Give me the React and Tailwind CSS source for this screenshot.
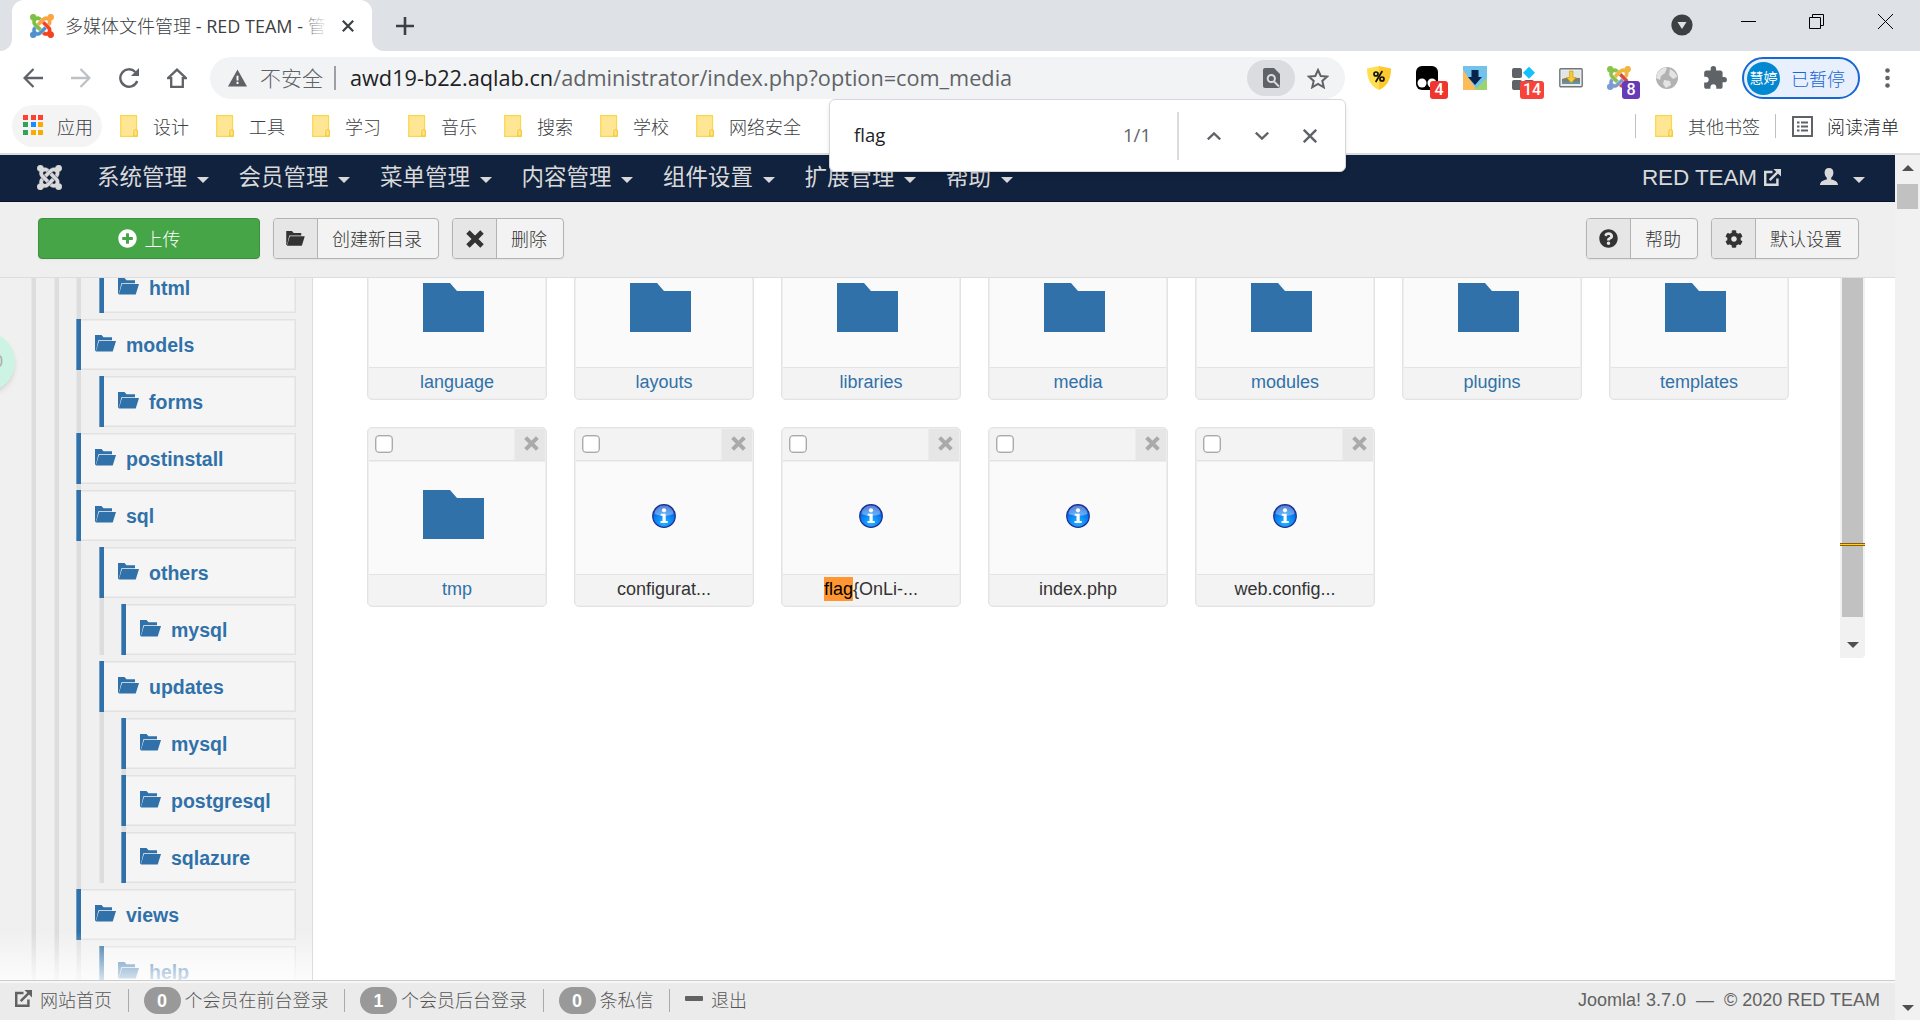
import { FaCog, FaPlusCircle, FaQuestionCircle } from "react-icons/fa";
import { MdExtension } from "react-icons/md";

const BOOKMARKS = ["设计", "工具", "学习", "音乐", "搜索", "学校", "网络安全"];

const MENUS = ["系统管理", "会员管理", "菜单管理", "内容管理", "组件设置", "扩展管理", "帮助"];

const TREE = [
  { name: "html", level: 4 },
  { name: "models", level: 3 },
  { name: "forms", level: 4 },
  { name: "postinstall", level: 3 },
  { name: "sql", level: 3 },
  { name: "others", level: 4 },
  { name: "mysql", level: 5 },
  { name: "updates", level: 4 },
  { name: "mysql", level: 5 },
  { name: "postgresql", level: 5, joined: true },
  { name: "sqlazure", level: 5, joined: true },
  { name: "views", level: 3 },
  { name: "help", level: 4 },
];

const FOLDERS = ["language", "layouts", "libraries", "media", "modules", "plugins", "templates"];

const FILES = [
  { name: "tmp", folder: true },
  { name: "configurat..." },
  { name: "{OnLi-...", hit: "flag" },
  { name: "index.php" },
  { name: "web.config..." },
];

const JOOMLA_ARMS = [
  "M.6 92.1C.6 58.8 27.4 32 60.4 32c30 0 54.5 21.9 59.2 50.2 32.6-7.6 67.1.6 96.5 30l-44.3 44.3c-20.5-20.5-42.6-16.3-55.4-3.5-14.3 14.3-14.3 37.9 0 52.2l99.5 99.5-44 44.3c-87.7-87.2-49.7-49.7-99.8-99.7-26.8-26.5-35-64.8-24.8-98.9C20.4 144.6.6 120.7.6 92.1z",
  "M130.1 208.5l44.3 44.3c10-10 89.7-89.7 99.7-99.8 14.3-14.3 37.6-14.3 51.9 0 12.8 12.8 17 35-3.5 55.4l44 44.3c31.2-31.2 38.5-67.6 28.9-101.2 29.2-4.1 51.9-29.2 51.9-59.5 0-33.2-26.8-60.1-59.8-60.1-30.3 0-55.4 22.5-59.5 51.6-33.8-9.9-71.7-1.5-98.3 25.1-18.3 19.1-71.1 71.5-99.6 99.9z",
  "M396.4 360.7c8.2-32.7-.9-68.5-26.3-93.9-11.8-12.2 5 4.7-99.5-99.7l-44.3 44.3 99.7 99.7c14.3 14.3 14.3 37.6 0 51.9-12.8 12.8-35 17-55.4-3.5l-44 44.3c27.6 30.2 68 38.8 102.7 28 5.5 27.4 29.7 48.1 58.9 48.1 33 0 59.8-26.8 59.8-60.1 0-30.2-22.5-55-51.6-59.1z",
  "M312.1 307.6l-44-44.3c-87 86.4-50.4 50.4-99.7 99.8-14.3 14.3-37.6 14.3-51.9 0-13.1-13.4-16.9-35.3 3.2-55.4l-44-44.3c-30.2 30.2-38 65.2-29.5 98.3-26.7 6-46.2 29.9-46.2 58.2C0 453.2 26.8 480 59.8 480c28.6 0 52.5-19.8 58.6-46.7 32.7 8.2 68.5-.6 94.2-26 32.1-32 12.2-12.4 99.5-99.7z",
];

function Joomla({ colors, className }) {
  return (
    <svg viewBox="0 32 448 448" className={className}>
      {JOOMLA_ARMS.map((d, i) => (
        <path key={i} d={d} fill={colors[i]} stroke={colors[i]} strokeWidth="6" />
      ))}
    </svg>
  );
}

function BookmarkFolder() {
  return (
    <svg viewBox="0 0 18 22" className="h-[22px] w-[18px] shrink-0">
      <path d="M.7.7h15.8v14.6h.8v6H.7z" fill="#ffe694" stroke="#fbd647" strokeWidth="1.2" />
      <path d="M13.8 21v-4.6a1.7 1.7 0 0 1 3.4 0V21z" fill="#ffe38c" stroke="#f2c531" strokeWidth="1" />
    </svg>
  );
}

function FolderOpen({ className }) {
  return (
    <svg viewBox="0 0 21 17" className={className} fill="currentColor">
      <path d="M0 16V0h6.5l2 2.2H17v3H3.4L1 15.5z" />
      <path d="M4 6h17l-3.3 10.6H.8z" />
    </svg>
  );
}

function Cross({ className }) {
  return (
    <svg viewBox="0 0 20 20" className={className} fill="none" stroke="currentColor" strokeWidth="5.4">
      <path d="M2.2 2.2l15.6 15.6M17.8 2.2L2.2 17.8" />
    </svg>
  );
}

function ExternalLink({ className }) {
  return (
    <svg viewBox="0 0 18 18" className={className} fill="none" stroke="currentColor">
      <path d="M9 3.2H1.3v13.5h12.9V10" strokeWidth="2.6" />
      <path d="M6 11.8l8.5-8.5" strokeWidth="2.6" />
      <path d="M10 0h8v8z" fill="currentColor" stroke="none" />
    </svg>
  );
}

function Caret({ className }) {
  return (
    <svg viewBox="0 0 12 6" className={className}>
      <path d="M0 0h12L6 6z" fill="currentColor" />
    </svg>
  );
}

function Badge({ className, children }) {
  return (
    <span
      className={`absolute top-[15px] flex h-[18px] items-center justify-center rounded-[3px] font-['Roboto'] text-[16px] font-medium text-white ${className}`}
    >
      {children}
    </span>
  );
}

function TabStrip() {
  return (
    <div className="flex h-[51px] bg-[#dee1e6]">
      <div className="flex w-3 flex-col justify-end bg-white">
        <div className="h-full rounded-br-[12px] bg-[#dee1e6]" />
      </div>
      <div className="bg-[#dee1e6]">
        <div className="flex h-[51px] w-[360px] items-center rounded-t-[12px] bg-white pl-[18px]">
          <Joomla colors={["#7ac143", "#f9a541", "#f44321", "#5091cd"]} className="h-6 w-6" />
          <div className="relative ml-[11px] w-[264px] overflow-hidden text-[18px] leading-6 font-light whitespace-nowrap text-[#3c4043]">
            多媒体文件管理 <span className="font-normal">- RED TEAM -</span> 管
            <div className="absolute inset-y-0 right-0 w-6 bg-linear-to-r from-white/30 to-white" />
          </div>
          <svg viewBox="0 0 12 12" className="ml-[13px] h-3 w-3" stroke="#3c4043" strokeWidth="2.2">
            <path d="M.8.8l10.4 10.4M11.2.8L.8 11.2" />
          </svg>
        </div>
      </div>
      <div className="w-3 bg-white">
        <div className="h-full rounded-bl-[12px] bg-[#dee1e6]" />
      </div>
      <svg viewBox="0 0 18 18" className="mt-[17px] ml-3 h-[18px] w-[18px]" stroke="#3c4043" strokeWidth="2.6">
        <path d="M9 0v18M0 9h18" />
      </svg>
      <div className="ml-auto flex pr-[27px]">
        <svg viewBox="0 0 22 22" className="mt-[14px] h-[22px] w-[22px]">
          <circle cx="11" cy="11" r="10.6" fill="#3c4043" />
          <path d="M6.5 8h9L11 15z" fill="#dee1e6" />
        </svg>
        <svg viewBox="0 0 15 15" className="mt-[14px] ml-[48px] h-[15px] w-[15px]" stroke="#000" fill="none">
          <path d="M0 7.5h15" />
        </svg>
        <svg viewBox="0 0 15 15" className="mt-[14px] ml-[53px] h-[15px] w-[15px]" stroke="#000" fill="none">
          <path d="M.5 3.5h11v11H.5zM3.5 3.5v-3h11v11h-3" />
        </svg>
        <svg viewBox="0 0 15 15" className="mt-[14px] ml-[54px] h-[15px] w-[15px]" stroke="#000" fill="none">
          <path d="M0 0l15 15M15 0L0 15" />
        </svg>
      </div>
    </div>
  );
}

function Extensions() {
  return (
    <div className="ml-[22px] flex items-center">
      <svg viewBox="0 0 24 24" className="h-6 w-6">
        <path d="M12 0l12 2.6C24 14 20 20.5 12 24z" fill="#fdc92e" />
        <path d="M12 0L0 2.6C0 14 4 20.5 12 24z" fill="#ffdf4f" />
        <g stroke="#111" strokeWidth="1.7" fill="none">
          <circle cx="9" cy="8" r="2" />
          <circle cx="15" cy="13" r="2" />
          <path d="M15.3 5L8.7 16" />
        </g>
      </svg>
      <div className="relative ml-[25px] h-6 w-[22px]">
        <svg viewBox="0 0 22 24" className="h-6 w-[22px]">
          <rect width="22" height="24" rx="6" fill="#000" />
          <circle cx="6" cy="17" r="4.5" fill="#fff" />
          <circle cx="16" cy="17" r="4.5" fill="#fff" />
        </svg>
        <Badge className="left-[14px] w-[18px] bg-[#f0352f]">4</Badge>
      </div>
      <svg viewBox="0 0 24 24" className="ml-[25px] h-6 w-6">
        <path d="M0 0h24v24H0z" fill="#72c2ea" />
        <path d="M0 4l14 20H0z" fill="#fbbd5c" />
        <path d="M24 12v12H11z" fill="#9fd371" />
        <path d="M8.5 4h7v7H19l-7 8-7-8h3.5z" fill="#05254f" />
      </svg>
      <div className="relative ml-[25px] h-6 w-6">
        <svg viewBox="0 0 24 24" className="h-6 w-6">
          <g fill="#5f6368">
            <rect y="2" width="10" height="10" rx="2" />
            <rect y="14" width="10" height="10" rx="2" />
            <rect x="12" y="14" width="10" height="10" rx="2" />
          </g>
          <path d="M17 .8l6 6-6 6-6-6z" fill="#12c2ff" />
        </svg>
        <Badge className="left-[8px] w-[24px] bg-[#f8433a]">14</Badge>
      </div>
      <svg viewBox="0 0 24 20" className="ml-[23px] h-5 w-6">
        <rect x=".8" y=".8" width="22.4" height="18" rx="1" fill="#e9edf0" stroke="#73777a" strokeWidth="1.4" />
        <path d="M3 3h18v8H3z" fill="#dfe6e6" />
        <path d="M3 11q4-2 18-1v6H3z" fill="#8a7b60" />
        <path d="M3 13.5h18V16H3z" fill="#5f93ac" />
        <path d="M10.5 3h3.5v6.5h3L12.3 15 7.5 9.5h3z" fill="#f6ca31" stroke="#c99312" strokeWidth=".6" />
      </svg>
      <div className="relative ml-[24px] h-6 w-6">
        <Joomla colors={["#8bc34a", "#f0b740", "#d94a3d", "#7c9bd2"]} className="h-6 w-6" />
        <Badge className="left-[15px] w-[18px] bg-[#673ab7]">8</Badge>
      </div>
      <svg viewBox="0 0 24 24" className="ml-[24px] h-6 w-6">
        <circle cx="12" cy="12" r="11" fill="#b2b2b2" />
        <path d="M4 5q5-5 8-3l-2 5-4 3-1 4-4-2q0-4 3-7zM15 3q6 3 7 8l-4 2-4-4zM9 14l6 1 1 4-5 3-3-4z" fill="#e4e4e4" />
      </svg>
      <MdExtension className="ml-[23px] h-[26px] w-[26px] text-[#5f6368]" />
    </div>
  );
}

function AddressBar() {
  return (
    <div className="flex h-[54px] items-center bg-white py-1.5 pl-[23px]">
      <div className="flex items-center gap-[28px] text-[#5f6368]">
        <svg viewBox="0 0 20 20" className="h-5 w-5" fill="none" stroke="currentColor" strokeWidth="2.3">
          <path d="M20 10H2M10.5 1L1.6 10l8.9 9" />
        </svg>
        <svg viewBox="0 0 20 20" className="h-5 w-5 text-[#bdc1c6]" fill="none" stroke="currentColor" strokeWidth="2.3">
          <path d="M0 10h18M9.5 1l8.9 9-8.9 9" />
        </svg>
        <svg viewBox="0 0 20 20" className="h-5 w-5" fill="none" stroke="currentColor" strokeWidth="2.4">
          <path d="M18.2 13A8.7 8.7 0 1 1 16.3 4" />
          <path d="M20 0v8h-8z" fill="currentColor" stroke="none" />
        </svg>
        <svg viewBox="0 0 20 20" className="h-5 w-5" fill="none" stroke="currentColor" strokeWidth="2.3">
          <path d="M1 10.2h3.2v8.6h11.6v-8.6H19L10 1.6z" />
        </svg>
      </div>
      <div className="ml-[23px] flex h-[42px] w-[1135px] items-center rounded-full bg-[#f1f3f4] pl-[18px]">
        <svg viewBox="0 0 20 18" className="h-[18px] w-[19px]">
          <path d="M10 0l10 18H0z" fill="#5f6368" />
          <path d="M9 6.5h2v5H9zM9 13h2v2.2H9z" fill="#fff" />
        </svg>
        <span className="ml-[13px] text-[21px] font-light text-[#5f6368]">不安全</span>
        <div className="ml-[11px] h-6 w-0.5 bg-[#9aa0a6]" />
        <span className="ml-3.5 w-[672px] text-[21.7px] whitespace-nowrap text-[#5f6368]">
          <span className="text-[#202124]">awd19-b22.aqlab.cn</span>
          /administrator/index.php?option=com_media
        </span>
        <div className="ml-auto flex h-9 w-12 items-center justify-center rounded-full bg-[#dadce0]">
          <svg viewBox="0 0 17 20" className="h-5 w-[17px]">
            <path d="M2 0h9l6 6v12a2 2 0 0 1-2 2H2a2 2 0 0 1-2-2V2a2 2 0 0 1 2-2z" fill="#5f6368" />
            <circle cx="8.3" cy="10.5" r="3.6" fill="none" stroke="#dadce0" strokeWidth="2" />
            <path d="M11 13.5l5 5" stroke="#dadce0" strokeWidth="2" />
          </svg>
        </div>
        <svg viewBox="0 0 22 21" className="mr-4 ml-3 h-[21px] w-[22px]" fill="none" stroke="#5f6368" strokeWidth="2">
          <path d="M11 2l2.7 6 6.5.6-4.9 4.3 1.5 6.4-5.8-3.4-5.8 3.4 1.5-6.4L1.8 8.6 8.3 8z" />
        </svg>
      </div>
      <Extensions />
      <div className="ml-[14px] flex h-[42px] w-[118px] shrink-0 items-center rounded-full border-2 border-[#1967d2] bg-[#e8f0fe] pl-[3px] text-[#1967d2]">
        <span className="flex h-[33px] w-[33px] items-center justify-center rounded-full bg-[#0288d1] text-[14px] text-white">
          慧婷
        </span>
        <span className="mt-0.5 ml-[11px] text-[18px] font-light">已暂停</span>
      </div>
      <svg viewBox="0 0 5 20" className="ml-[25px] h-5 w-[5px]" fill="#5f6368">
        <circle cx="2.5" cy="2.5" r="2.3" />
        <circle cx="2.5" cy="10" r="2.3" />
        <circle cx="2.5" cy="17.5" r="2.3" />
      </svg>
    </div>
  );
}

function BookmarksBar() {
  const dots = ["#ff4131", "#ff4131", "#ff4131", "#34a35a", "#1a8cff", "#f9ab00", "#34a35a", "#f9ab00", "#f9ab00"];
  return (
    <div className="flex h-[50px] items-start border-b-2 border-[#dadce0] bg-white pl-3 text-[18px] font-light text-[#3c4043]">
      <div className="flex h-[42px] w-[90px] items-center rounded-full bg-[#f4f4f4] pl-[11px]">
        <div className="-mt-[3px] grid grid-cols-3 gap-[2.5px]">
          {dots.map((color, i) => (
            <i key={i} className="h-[5px] w-[5px]" style={{ background: color }} />
          ))}
        </div>
        <span className="mt-0.5 ml-[14px]">应用</span>
      </div>
      <div className="ml-[18px] flex h-[42px] items-center gap-[27px]">
        {BOOKMARKS.map((name) => (
          <div key={name} className="flex items-center gap-[15px]">
            <BookmarkFolder />
            <span className="mt-0.5">{name}</span>
          </div>
        ))}
      </div>
      <div className="mr-[21px] ml-auto flex h-[42px] items-center">
        <div className="h-6 w-px bg-[#bdc1c6]" />
        <div className="ml-[19px] flex items-center gap-[15px]">
          <BookmarkFolder />
          <span className="mt-0.5">其他书签</span>
        </div>
        <div className="ml-[15px] h-6 w-px bg-[#bdc1c6]" />
        <svg viewBox="0 0 21 21" className="ml-4 h-[21px] w-[21px]" fill="none" stroke="#5f6368">
          <rect x="1" y="1" width="19" height="19" strokeWidth="2" />
          <path d="M5 6.5h2.5M5 10.5h2.5M5 14.5h2.5M9 6.5h7M9 10.5h7M9 14.5h7" strokeWidth="2" />
        </svg>
        <span className="mt-0.5 ml-[14px] text-[#202124]">阅读清单</span>
      </div>
    </div>
  );
}

function FindBar() {
  return (
    <div className="absolute top-[99px] left-[829px] z-10 flex h-[73px] w-[517px] items-center rounded-[6px] border border-[#d5d7da] bg-white pl-6 text-[18.5px] text-[#202124] shadow-md">
      <span>flag</span>
      <span className="ml-auto text-[#5f6368]">1/1</span>
      <div className="ml-[26px] h-12 w-0.5 bg-[#dadce0]" />
      <svg viewBox="0 0 14 8" className="ml-[28px] h-2 w-3.5" fill="none" stroke="#5f6368" strokeWidth="2.3">
        <path d="M.8 7.4L7 1.4l6.2 6" />
      </svg>
      <svg viewBox="0 0 14 8" className="ml-[34px] h-2 w-3.5" fill="none" stroke="#5f6368" strokeWidth="2.3">
        <path d="M.8.6L7 6.6l6.2-6" />
      </svg>
      <svg viewBox="0 0 14 14" className="mr-[28px] ml-[34px] h-3.5 w-3.5" stroke="#5f6368" strokeWidth="2.4">
        <path d="M.8.8l12.4 12.4M13.2.8L.8 13.2" />
      </svg>
    </div>
  );
}

function Navbar() {
  return (
    <div className="flex h-[47px] items-center border-b border-[#0a0f2a] bg-[#10223e] pl-[37px] text-[22.5px] text-[#d9d9d9]">
      <Joomla colors={["#d9d9d9", "#d9d9d9", "#d9d9d9", "#d9d9d9"]} className="-mt-0.5 h-[25px] w-[25px]" />
      <div className="ml-[35px] flex items-center gap-[30px]">
        {MENUS.map((name) => (
          <div key={name} className="flex items-center">
            <span>{name}</span>
            <Caret className="mt-[3px] ml-[9.5px] h-1.5 w-3" />
          </div>
        ))}
      </div>
      <span className="ml-auto font-['Liberation_Sans'] tracking-[-0.1px]">RED TEAM</span>
      <ExternalLink className="-mt-px ml-[7px] h-[17px] w-[17px]" />
      <svg viewBox="0 0 18 17" className="-mt-1 ml-[39px] h-[17px] w-[18px]" fill="currentColor">
        <path d="M9 0c3 0 4.4 2 4.4 4.6 0 2.4-1 4.2-2.2 5.2v1.6C15 12.2 18 13.6 18 17H0c0-3.4 3-4.8 6.8-5.6V9.8C5.6 8.8 4.6 7 4.6 4.6 4.6 2 6 0 9 0z" />
      </svg>
      <Caret className="mt-[3px] mr-[30px] ml-[15px] h-1.5 w-3" />
    </div>
  );
}

function ToolButton({ icon, label, className }) {
  return (
    <div
      className={`flex h-[41px] overflow-hidden rounded-[4px] border border-[#b3b3b3] bg-[#f3f3f3] text-[#333] shadow-xs ${className}`}
    >
      <div className="flex w-[44px] shrink-0 items-center justify-center border-r border-[#b3b3b3] bg-[#e6e6e6]">
        {icon}
      </div>
      <span className="mt-[3px] flex flex-1 items-center justify-center pr-0.5 text-[18px] font-light">{label}</span>
    </div>
  );
}

function Toolbar() {
  return (
    <div className="flex h-[76px] border-b border-[#ddd] bg-[#efefef] pt-4 pl-[38px]">
      <div className="flex h-[41px] w-[222px] items-center justify-center gap-2 rounded-[4px] border border-[#3d903d] bg-[#46a546] text-[18px] text-white shadow-xs">
        <FaPlusCircle className="h-[19px] w-[19px]" />
        <span className="mt-[3px] font-light">上传</span>
      </div>
      <ToolButton className="ml-[13px] w-[166px]" icon={<FolderOpen className="h-[15px] w-[19px]" />} label="创建新目录" />
      <ToolButton className="ml-[13px] w-[112px]" icon={<Cross className="h-[18px] w-[18px]" />} label="删除" />
      <ToolButton className="ml-auto w-[112px]" icon={<FaQuestionCircle className="h-[19px] w-[19px]" />} label="帮助" />
      <ToolButton className="mr-9 ml-[13px] w-[148px]" icon={<FaCog className="h-[18px] w-[18px]" />} label="默认设置" />
    </div>
  );
}

function Rail({ className }) {
  return <div className={`w-[5px] shrink-0 border-l border-[#e7e7e7] bg-[#ddd] ${className}`} />;
}

function TreeRow({ node }) {
  return (
    <div className="flex h-[57px] pl-[31px]">
      <Rail />
      <Rail className="ml-[18px]" />
      {node.level > 3 && <Rail className="ml-[17px]" />}
      {node.level === 5 && <Rail className="ml-[18px]" />}
      <div className={`flex flex-1 flex-col ${node.level === 4 ? "ml-[18px]" : "ml-[17px]"}`}>
        <div className={`h-1.5 w-[5px] ${node.level === 3 || node.joined ? "border-l border-[#e7e7e7] bg-[#ddd]" : ""}`} />
        <div className="flex h-[51px] text-[#3071a9]">
          <div className="w-[5px] border-l border-[#6f9cc3] bg-[#3071a9]" />
          <div className="flex flex-1 items-center border border-l-0 border-[#e2e2e2] bg-[#f5f5f5] pl-3.5 shadow-[inset_-1px_0_0_#ebebeb,inset_0_1px_0_#ebebeb,inset_0_-1px_0_#ebebeb]">
            <FolderOpen className="-mt-0.5 h-[17px] w-[21px]" />
            <span className="ml-2.5 text-[19.5px] leading-6 font-bold">{node.name}</span>
          </div>
        </div>
      </div>
    </div>
  );
}

function Sidebar() {
  return (
    <div className="relative flex w-[313px] shrink-0 flex-col justify-start overflow-hidden border-r border-[#ddd] bg-[#f0f0f0] pr-4">
      <div className="-mt-[22px]">
        {TREE.map((node, i) => (
          <TreeRow key={i} node={node} />
        ))}
      </div>
      <div className="absolute top-[54px] -left-[45px] flex h-[60px] w-[60px] items-center justify-end rounded-full bg-[#cdf3e5] pr-[12px] text-[16px] text-[#aaa] shadow-md">
        0
      </div>
      <div className="absolute inset-x-0 bottom-0 h-12 bg-linear-to-b from-white/0 to-white/80" />
    </div>
  );
}

function InfoIcon() {
  return (
    <svg viewBox="0 0 24 24" className="-mt-1 h-6 w-6">
      <defs>
        <radialGradient id="info" cx="50%" cy="80%" r="75%">
          <stop offset="0" stopColor="#20b4ff" />
          <stop offset=".65" stopColor="#0878f0" />
          <stop offset="1" stopColor="#0a3fb5" />
        </radialGradient>
      </defs>
      <circle cx="12" cy="12" r="11.3" fill="url(#info)" stroke="#1c2f94" strokeWidth="1.2" />
      <path d="M2.5 10a9.5 8.5 0 0 1 19 0q-9 4-19 0z" fill="#fff" opacity=".35" />
      <circle cx="12" cy="6.3" r="2.1" fill="#fff" />
      <path d="M8.7 9.7h5v7.3h2v2H8.5v-2h2v-5.3H8.7z" fill="#fff" />
    </svg>
  );
}

function Card({ name, folder, hit }) {
  return (
    <div className="flex h-[180px] w-[180px] flex-col overflow-hidden rounded-[5px] border border-[#e3e3e3] bg-[#eeeeee] p-px">
      <div className="flex h-[32px] shrink-0 border-b border-[#e3e3e3] bg-[#f3f3f3]">
        <div className="mt-1.5 ml-1.5 h-[18px] w-[18px] rounded-[4px] border border-[#aaa] bg-white shadow-[inset_0_0_0_.5px_#bbb]" />
        <div className="ml-auto flex w-[31px] items-center justify-center border-l border-[#ececec] bg-[#e6e6e6] text-[#aaa]">
          <Cross className="-mt-0.5 ml-0.5 h-[15px] w-[15px]" />
        </div>
      </div>
      <div className="flex flex-1 items-center justify-center bg-[#fafafa] shadow-[inset_0_1px_0_#eeeeee]">
        {folder ? (
          <svg viewBox="0 0 61 49" className="mr-2 mb-1.5 h-[49px] w-[61px]">
            <path d="M0 0h27l7 8h27v41H0z" fill="#3071a9" />
          </svg>
        ) : (
          <InfoIcon />
        )}
      </div>
      <div
        className={`flex h-[31px] shrink-0 items-center justify-center border-t border-[#e3e3e3] bg-[#f3f3f3] pb-[3px] text-[18px] ${
          folder ? "text-[#3071a9]" : "text-[#333]"
        }`}
      >
        {hit && <span className="bg-[#ff9632] py-[3px] text-black">{hit}</span>}
        {name}
      </div>
    </div>
  );
}

function MediaList() {
  return (
    <div className="flex flex-1 overflow-hidden bg-white">
      <div className="-mt-[58px] ml-[54px] flex flex-1 flex-col gap-[27px]">
        <div className="flex gap-[27px]">
          {FOLDERS.map((name) => (
            <Card key={name} name={name} folder />
          ))}
        </div>
        <div className="flex gap-[27px]">
          {FILES.map((file) => (
            <Card key={file.name} {...file} />
          ))}
        </div>
      </div>
      {/* list scrollbar with the search hit marker */}
      <div className="mr-[30px] flex h-[380px] w-[25px] flex-col items-center rounded-br-[4px] bg-[#f1f1f1]">
        <div className="h-[265px] w-[21px] bg-[#c1c1c1]" />
        <div className="h-[3px] w-full border-y border-[#8f5a0c] bg-[#ffd500]" />
        <div className="h-[71px] w-[21px] bg-[#c1c1c1]" />
        <Caret className="mt-[25px] h-1.5 w-3 text-[#505050]" />
      </div>
    </div>
  );
}

function Count({ value, label }) {
  return (
    <div className="flex items-center">
      <span className="flex h-[27px] w-[37px] items-center justify-center rounded-full bg-[#999] font-['Liberation_Sans'] text-[18px] font-bold text-white">
        {value}
      </span>
      <span className="ml-1">{label}</span>
    </div>
  );
}

function Divider() {
  return <div className="mr-[15px] ml-[15.5px] h-[23px] w-px bg-[#aaa]" />;
}

function StatusBar() {
  return (
    <div className="flex h-10 items-center border-t border-[#ccc] bg-[#ebebeb] pr-[15px] pl-[15px] text-[18px] font-light text-[#555] shadow-[inset_0_2px_0_#f7f7f7]">
      <ExternalLink className="-mt-1 h-[17px] w-[17px] text-[#626262]" />
      <span className="ml-2">网站首页</span>
      <Divider />
      <Count value="0" label="个会员在前台登录" />
      <Divider />
      <Count value="1" label="个会员后台登录" />
      <Divider />
      <Count value="0" label="条私信" />
      <Divider />
      <div className="-mt-1 h-[5px] w-[18px] rounded-[1px] bg-[#626262]" />
      <span className="ml-2">退出</span>
      <span className="ml-auto pb-px font-['Liberation_Sans'] text-[#626262]">Joomla! 3.7.0&nbsp; — &nbsp;© 2020 RED TEAM</span>
    </div>
  );
}

export default function App() {
  return (
    <div className="relative flex h-[1020px] w-[1920px] flex-col overflow-hidden bg-white font-['Open_Sans','Noto_Sans_CJK_SC',sans-serif] leading-none">
      <TabStrip />
      <AddressBar />
      <BookmarksBar />
      <FindBar />
      <div className="flex min-h-0 flex-1 font-['Liberation_Sans','Noto_Sans_CJK_SC',sans-serif]">
        <div className="flex flex-1 flex-col">
          <Navbar />
          <Toolbar />
          <div className="flex min-h-0 flex-1">
            <Sidebar />
            <MediaList />
          </div>
          <StatusBar />
        </div>
        <div className="flex w-[25px] flex-col items-center bg-[#f1f1f1] text-[#505050]">
          <Caret className="mt-2.5 h-1.5 w-3 rotate-180" />
          <div className="mt-[13px] h-[25px] w-[21px] bg-[#c1c1c1]" />
          <Caret className="mt-auto mb-[9px] h-1.5 w-3" />
        </div>
      </div>
    </div>
  );
}
